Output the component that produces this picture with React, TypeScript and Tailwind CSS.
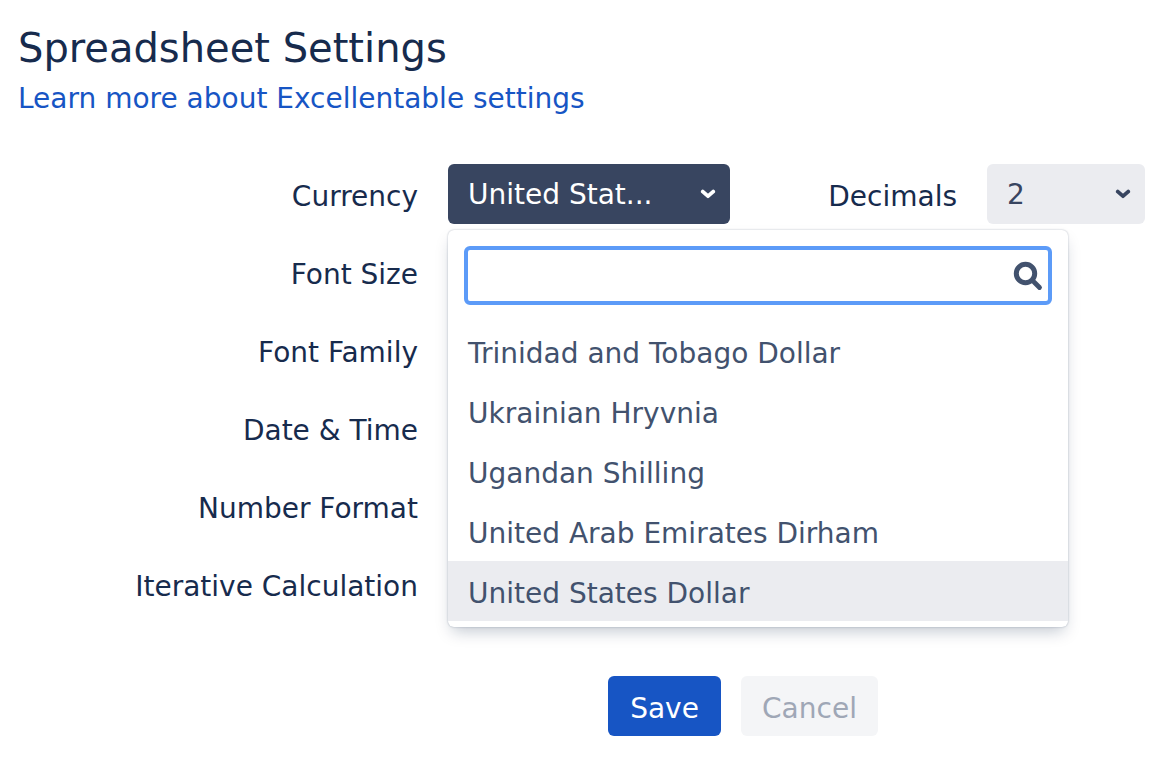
import { useState } from 'react';

const currencies = [
  'Trinidad and Tobago Dollar',
  'Ukrainian Hryvnia',
  'Ugandan Shilling',
  'United Arab Emirates Dirham',
  'United States Dollar',
];

const otherSettings = [
  'Font Size',
  'Font Family',
  'Date & Time',
  'Number Format',
  'Iterative Calculation',
];

const shorten = (name: string) =>
  name.length > 14 ? `${name.slice(0, 11)}...` : name;

function Chevron({ className }: { className: string }) {
  return (
    <svg viewBox="0 0 16 10" className={className} aria-hidden="true">
      <path
        d="M2.8 2.6 8 7.2 13.2 2.6"
        fill="none"
        stroke="currentColor"
        strokeWidth="3.8"
        strokeLinecap="round"
        strokeLinejoin="round"
      />
    </svg>
  );
}

function SearchIcon() {
  return (
    <svg
      viewBox="0 0 30 30"
      className="w-[30px] h-[30px] shrink-0"
      fill="none"
      stroke="currentColor"
      aria-hidden="true"
    >
      <circle cx="12.5" cy="12.5" r="9.2" strokeWidth="5" />
      <path d="M21 21 26.5 26.5" strokeWidth="4.8" strokeLinecap="round" />
    </svg>
  );
}

export default function App() {
  const [open, setOpen] = useState(true);
  const [currency, setCurrency] = useState('United States Dollar');
  const [decimals, setDecimals] = useState('2');
  const [search, setSearch] = useState('');

  const matches = currencies.filter((c) =>
    c.toLowerCase().includes(search.toLowerCase())
  );

  const pick = (name: string) => {
    setCurrency(name);
    setOpen(false);
  };

  return (
    <main className="bg-white pl-[18px] pr-[25px] pt-6 pb-10 text-[28px] leading-9 text-[#172b4d] font-['Verdana','DejaVu_Sans',sans-serif]">
      <h1 className="text-[40px] leading-12">Spreadsheet Settings</h1>
      <a href="#settings-help" className="block mt-[9px] text-[#1755c4]">
        Learn more about Excellentable settings
      </a>

      <form className="mt-[47px]" onSubmit={(e) => e.preventDefault()}>
        <div className="flex flex-col gap-[18px]">
          {/* currency + decimals */}
          <div className="flex items-center h-[60px]">
            <label
              htmlFor="currency"
              className="w-[400px] mr-[30px] pt-1.5 text-right shrink-0"
            >
              Currency
            </label>
            <div className="relative w-[282px] shrink-0">
              <button
                id="currency"
                type="button"
                aria-haspopup="listbox"
                aria-expanded={open}
                onClick={() => setOpen(!open)}
                className="flex items-center justify-between w-full h-[60px] pl-5 pr-[14px] rounded-md bg-[#384560] text-white"
              >
                <span className="pt-0.5">{shorten(currency)}</span>
                <Chevron className="w-4 h-[10px]" />
              </button>

              {open && (
                <div className="absolute left-0 top-[66px] z-10 w-[620px] pt-4 pb-[6px] rounded-md bg-white text-[#42526e] shadow-[0_8px_16px_-4px_rgba(9,30,66,0.25),0_0_2px_rgba(9,30,66,0.31)]">
                  <div className="flex items-center h-[59px] mx-4 mb-4 pr-[5px] rounded-md border-4 border-[#5c9bf8]">
                    <input
                      type="text"
                      aria-label="Search currency"
                      value={search}
                      onChange={(e) => setSearch(e.target.value)}
                      className="flex-1 min-w-0 h-full px-3 outline-none"
                    />
                    <SearchIcon />
                  </div>
                  <ul role="listbox" aria-label="Currency">
                    {matches.map((name) => (
                      <li
                        key={name}
                        role="option"
                        aria-selected={name === currency}
                        onClick={() => pick(name)}
                        className={`flex items-center h-[60px] px-5 pt-1.5 cursor-pointer ${
                          name === currency
                            ? 'bg-[#ebecf0]'
                            : 'hover:bg-[#f4f5f7]'
                        }`}
                      >
                        {name}
                      </li>
                    ))}
                  </ul>
                </div>
              )}
            </div>

            <label htmlFor="decimals" className="ml-auto mr-[30px] pt-1.5">
              Decimals
            </label>
            <div className="relative w-[158px] shrink-0">
              <select
                id="decimals"
                value={decimals}
                onChange={(e) => setDecimals(e.target.value)}
                className="appearance-none w-full h-[60px] pl-5 pr-10 pt-0.5 rounded-md bg-[#ebecf0] text-[#384560]"
              >
                {['0', '1', '2', '3', '4'].map((n) => (
                  <option key={n}>{n}</option>
                ))}
              </select>
              <Chevron className="absolute right-[14px] top-[25px] w-4 h-[10px] text-[#384560] pointer-events-none" />
            </div>
          </div>

          {otherSettings.map((label) => (
            <div key={label} className="flex items-center h-[60px]">
              <span className="w-[400px] pt-1.5 text-right">{label}</span>
            </div>
          ))}
        </div>

        {/* actions */}
        <div className="flex gap-5 mt-[62px] pl-[590px]">
          <button
            type="submit"
            className="w-[113px] h-[60px] pt-1.5 rounded-md bg-[#1755c4] text-white"
          >
            Save
          </button>
          <button
            type="button"
            className="w-[137px] h-[60px] pt-1.5 rounded-md bg-[#f4f5f7] text-[#9fa7b6]"
          >
            Cancel
          </button>
        </div>
      </form>
    </main>
  );
}
